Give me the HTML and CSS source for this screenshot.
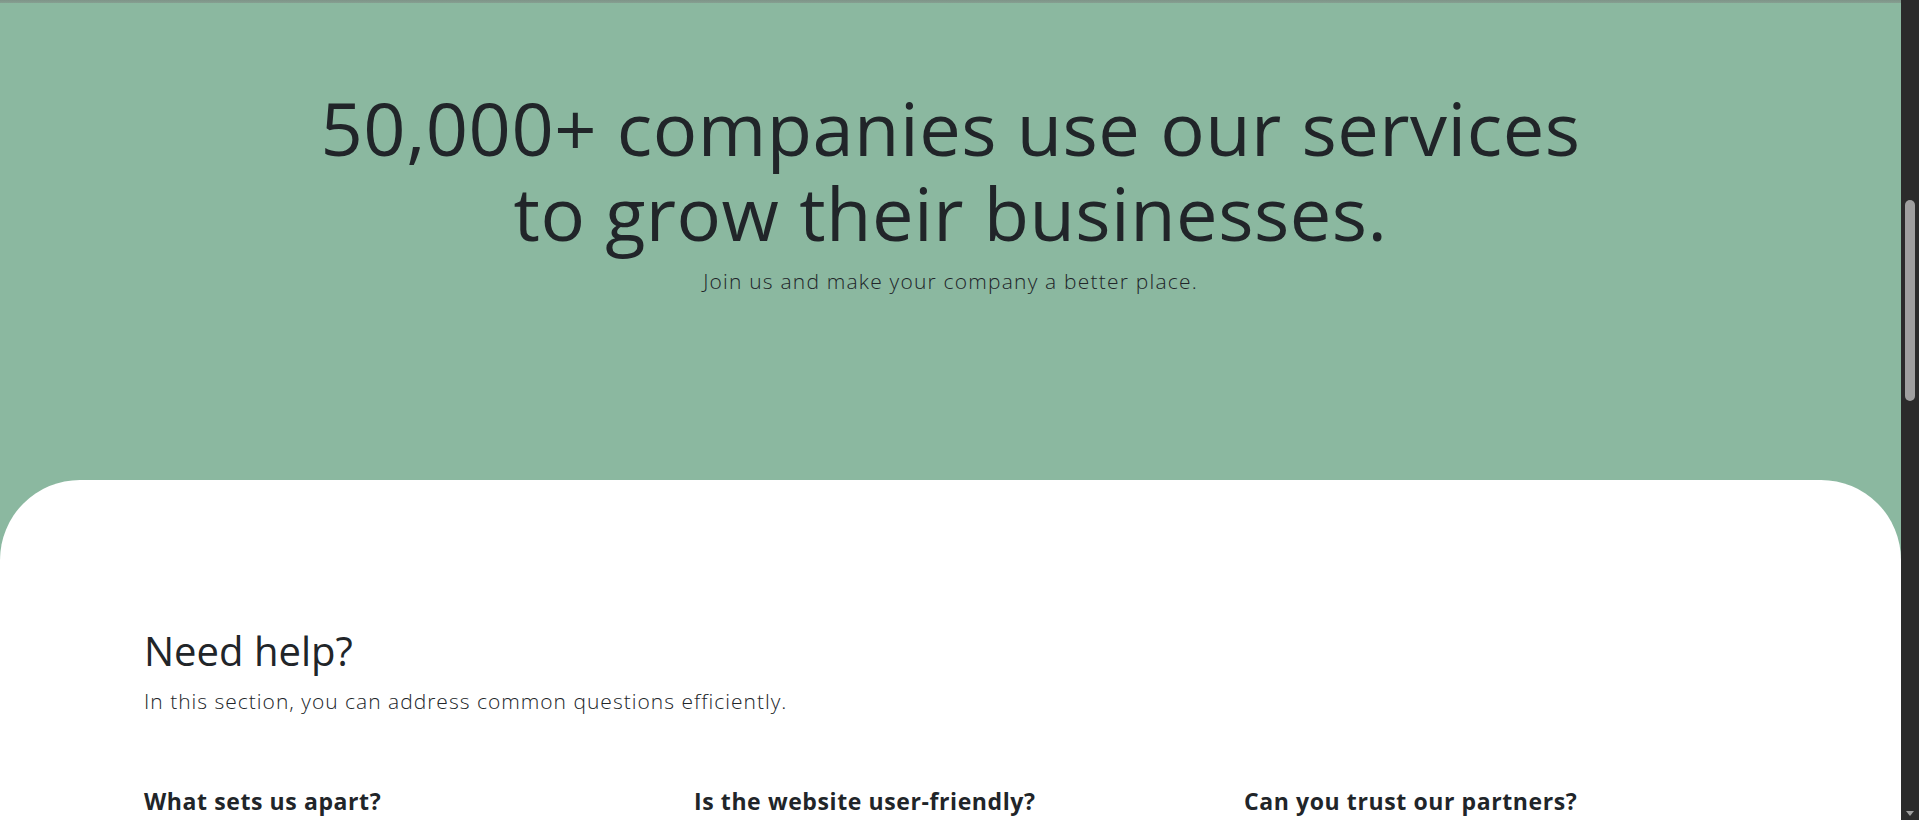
FILE: index.html
```html
<!DOCTYPE html>
<html lang="en">
<head>
<meta charset="utf-8">
<title>Companies</title>
<link rel="stylesheet" href="styles.css">
</head>
<body>
<div class="page">
  <main class="main">
    <div class="topline"></div>
    <section class="hero">
      <h1 class="hero-title">50,000+ companies use our services<br>to grow their businesses.</h1>
      <p class="hero-sub">Join us and make your company a better place.</p>
    </section>
    <section class="help">
      <h2 class="help-title">Need help?</h2>
      <p class="help-sub">In this section, you can address common questions efficiently.</p>
      <div class="faq">
        <h3 class="faq-q">What sets us apart?</h3>
        <h3 class="faq-q">Is the website user-friendly?</h3>
        <h3 class="faq-q">Can you trust our partners?</h3>
      </div>
    </section>
  </main>
  <aside class="scrollbar">
    <div class="thumb"></div>
    <div class="arrow"></div>
  </aside>
</div>
</body>
</html>
```

FILE: styles.css
```css
html, body {
  margin: 0;
  padding: 0;
  height: 820px;
  overflow: hidden;
}
body {
  font-family: "Open Sans", "Liberation Sans", sans-serif;
  color: #212529;
}
.page {
  display: flex;
  height: 820px;
}
.main {
  flex: 1;
  background: #8bb8a0;
  display: flex;
  flex-direction: column;
  overflow: hidden;
}
.topline {
  height: 3px;
  background: linear-gradient(#7e9488, #869f91);
}
.hero {
  height: 477px;
  display: flex;
  flex-direction: column;
  align-items: center;
  box-sizing: border-box;
  padding-top: 82px;
}
.hero-title {
  margin: 0;
  font-size: 74px;
  font-weight: 400;
  line-height: 1.15;
  letter-spacing: 0.5px;
  text-align: center;
}
.hero-sub {
  margin: 12px 0 0;
  font-size: 21px;
  font-weight: 300;
  letter-spacing: 1.2px;
}
.help {
  flex: 1;
  background: #fff;
  border-radius: 80px 80px 0 0;
  padding: 147px 0 0 144px;
}
.help-title {
  margin: 0;
  font-size: 40px;
  font-weight: 400;
  line-height: 1.2;
}
.help-sub {
  margin: 12px 0 0;
  font-size: 21px;
  font-weight: 300;
  letter-spacing: 1px;
}
.faq {
  display: grid;
  grid-template-columns: repeat(3, 526px);
  column-gap: 24px;
  margin-top: 70px;
}
.faq-q {
  margin: 0;
  font-size: 23px;
  font-weight: 700;
  letter-spacing: 0.6px;
}
.scrollbar {
  width: 18px;
  background: #2b2b2b;
  position: relative;
}
.thumb {
  position: absolute;
  left: 4px;
  top: 200px;
  width: 10px;
  height: 201px;
  border-radius: 5px;
  background: #9f9f9f;
}
.arrow {
  position: absolute;
  left: 5px;
  bottom: 4px;
  width: 0;
  height: 0;
  border-left: 4px solid transparent;
  border-right: 4px solid transparent;
  border-top: 5px solid #9f9f9f;
}
```
